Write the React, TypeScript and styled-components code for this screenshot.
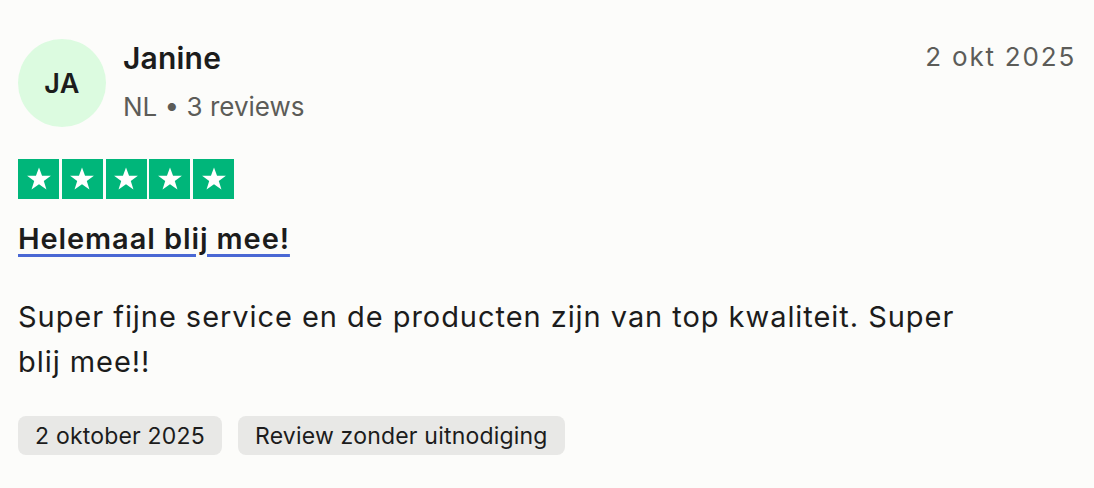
import styled, { createGlobalStyle } from "styled-components";

const GlobalStyle = createGlobalStyle`
  html, body {
    margin: 0;
    padding: 0;
    background: #fcfcfa;
  }
  body {
    font-family: Inter, "Noto Sans", sans-serif;
    color: #1c1c1c;
  }
`;

const StarSquare = () => (
  <StarBox>
    <svg width="28" height="28" viewBox="0 0 24 24">
      <path
        d="M12 2.2l2.6 7.1h7.6l-6.1 4.5 2.3 7.3L12 16.6l-6.4 4.5 2.3-7.3-6.1-4.5h7.6z"
        fill="#fff"
      />
    </svg>
  </StarBox>
);

const App = () => {
  const tags = ["2 oktober 2025", "Review zonder uitnodiging"];

  return (
    <>
      <GlobalStyle />
      <Card>
        <Header>
          <Avatar>JA</Avatar>
          <UserInfo>
            <Name>Janine</Name>
            <Meta>NL • 3 reviews</Meta>
          </UserInfo>
          <DateText>2 okt 2025</DateText>
        </Header>
        <Stars>
          {[0, 1, 2, 3, 4].map((i) => (
            <StarSquare key={i} />
          ))}
        </Stars>
        <Title href="#">Helemaal blij mee!</Title>
        <Body>
          Super fijne service en de producten zijn van top kwaliteit. Super
          blij mee!!
        </Body>
        <Tags>
          {tags.map((t) => (
            <Tag key={t}>{t}</Tag>
          ))}
        </Tags>
      </Card>
    </>
  );
};

export default App;

const Card = styled.div`
  padding: 39px 18px 0 18px;
  display: flex;
  flex-direction: column;
`;

const Header = styled.div`
  display: flex;
  align-items: flex-start;
`;

const Avatar = styled.div`
  width: 88px;
  height: 88px;
  border-radius: 50%;
  background: #dcfbe0;
  display: flex;
  align-items: center;
  justify-content: center;
  font-size: 27px;
  font-weight: 600;
  letter-spacing: 0.4px;
  color: #1c1c1c;
  flex-shrink: 0;
`;

const UserInfo = styled.div`
  display: flex;
  flex-direction: column;
  margin-left: 17px;
`;

const Name = styled.div`
  font-size: 30px;
  font-weight: 600;
  line-height: 38px;
  letter-spacing: 0.2px;
  color: #1c1c1c;
`;

const Meta = styled.div`
  margin-top: 13px;
  font-size: 26px;
  line-height: 34px;
  color: #5c5c58;
`;

const DateText = styled.div`
  margin-left: auto;
  font-size: 26px;
  line-height: 36px;
  letter-spacing: 1.8px;
  color: #5c5c58;
`;

const Stars = styled.div`
  display: flex;
  gap: 2.75px;
  margin-top: 32px;
`;

const StarBox = styled.div`
  width: 41px;
  height: 40px;
  background: #00b67a;
  display: flex;
  align-items: center;
  justify-content: center;
`;

const Title = styled.a`
  align-self: flex-start;
  margin-top: 22px;
  font-size: 29px;
  font-weight: 600;
  line-height: 36px;
  letter-spacing: 0.9px;
  color: #1c1c1c;
  text-decoration: underline;
  text-decoration-color: #4a68d4;
  text-decoration-thickness: 3px;
  text-underline-offset: 5px;
`;

const Body = styled.p`
  margin: 37px 0 0 0;
  max-width: 960px;
  font-size: 29px;
  line-height: 45px;
  letter-spacing: 0.95px;
  color: #1c1c1c;
`;

const Tags = styled.div`
  display: flex;
  gap: 16px;
  margin-top: 32px;
`;

const Tag = styled.div`
  background: #e8e8e6;
  border-radius: 8px;
  padding: 0 17px;
  height: 39px;
  display: flex;
  align-items: center;
  font-size: 23px;
  letter-spacing: 0.2px;
  color: #1c1c1c;
`;
